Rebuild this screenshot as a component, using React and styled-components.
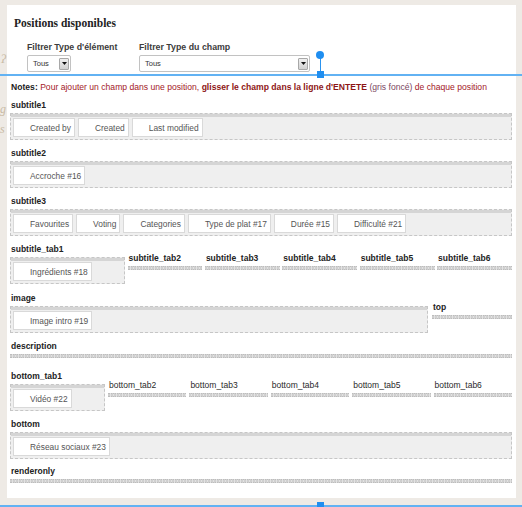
import React from 'react'
import styled, { createGlobalStyle } from 'styled-components'

const Global = createGlobalStyle`
  html, body { margin: 0; padding: 0; }
  body {
    background: #eeeae5;
    font-family: "Liberation Sans", Arial, sans-serif;
  }
  * { box-sizing: border-box; }
`

function Select({ width }) {
  return (
    <SelectBox width={width}>
      <span>Tous</span>
      <DropBtn>
        <svg width="5" height="3" viewBox="0 0 5 3"><path d="M0 0h5L2.5 3z" fill="#111" /></svg>
      </DropBtn>
    </SelectBox>
  )
}

function Position({ name, items, gap }) {
  return (
    <Section gap={gap}>
      <Label>{name}</Label>
      <Box>
        <Header />
        <Items>
          {items.map(i => <Item key={i}>{i}</Item>)}
        </Items>
      </Box>
    </Section>
  )
}

function EmptyPosition({ name }) {
  return (
    <Section gap={12}>
      <Label>{name}</Label>
      <Bar />
    </Section>
  )
}

function TabRow({ first, items, tabs, firstWidth, gap, light }) {
  return (
    <TabGrid first={firstWidth} gap={gap}>
      <div>
        <Label>{first}</Label>
        <Box>
          <Header />
          <Items>
            {items.map(i => <Item key={i}>{i}</Item>)}
          </Items>
        </Box>
      </div>
      {tabs.map(t => (
        <SideCol key={t}>
          <Label light={light}>{t}</Label>
          <Bar />
        </SideCol>
      ))}
    </TabGrid>
  )
}

export default function App() {
  return (
    <Page>
      <Global />
      <Decor top={52} left={1}>ʔ</Decor>
      <Decor top={102} left={0}>g</Decor>
      <Decor top={122} left={0}>s</Decor>
      <Panel>
        <Title>Positions disponibles</Title>
        <Filters>
          <Filter w={112}>
            <FilterLabel>Filtrer Type d'élément</FilterLabel>
            <Select width={44} />
          </Filter>
          <Filter>
            <FilterLabel>Filtrer Type du champ</FilterLabel>
            <Select width={171} />
          </Filter>
        </Filters>
        <Notes>
          <b>Notes:</b> Pour ajouter un champ dans une position,{' '}
          <strong>glisser le champ dans la ligne d'ENTETE</strong>{' '}
          <Muted>(gris foncé)</Muted> de chaque position
        </Notes>
        <Content>
          <Position name="subtitle1" items={['Created by', 'Created', 'Last modified']} />
          <Position name="subtitle2" items={['Accroche #16']} />
          <Position
            name="subtitle3"
            items={['Favourites', 'Voting', 'Categories', 'Type de plat #17', 'Durée #15', 'Difficulté #21']}
          />
          <Section gap={8}>
            <TabRow
              first="subtitle_tab1"
              items={['Ingrédients #18']}
              firstWidth={115}
              gap={2.5}
              tabs={['subtitle_tab2', 'subtitle_tab3', 'subtitle_tab4', 'subtitle_tab5', 'subtitle_tab6']}
            />
          </Section>
          <Section gap={7}>
            <ImageGrid>
              <div>
                <Label>image</Label>
                <Box>
                  <Header />
                  <Items><Item>Image intro #19</Item></Items>
                </Box>
              </div>
              <SideCol>
                <Label>top</Label>
                <Bar />
              </SideCol>
            </ImageGrid>
          </Section>
          <EmptyPosition name="description" />
          <Section gap={7}>
            <TabRow
              first="bottom_tab1"
              items={['Vidéo #22']}
              firstWidth={95}
              gap={3}
              light
              tabs={['bottom_tab2', 'bottom_tab3', 'bottom_tab4', 'bottom_tab5', 'bottom_tab6']}
            />
          </Section>
          <Position name="bottom" items={['Réseau sociaux #23']} gap={6} />
          <Section gap={0}>
            <Label>renderonly</Label>
            <Bar />
          </Section>
        </Content>
      </Panel>

      <HLine top={74} />
      <Stem />
      <Knob />
      <Grip top={71} />
      <HLine top={505} />
      <Grip top={502} />
    </Page>
  )
}

const Page = styled.div`
  position: relative;
  width: 522px;
  height: 507px;
  overflow: hidden;
  padding: 5px 6px 0 7px;
`
const Decor = styled.span`
  position: absolute;
  top: ${p => p.top}px;
  left: ${p => p.left}px;
  font-family: "Liberation Serif", serif;
  font-style: italic;
  font-size: 12px;
  color: #c9bba5;
`
const Panel = styled.div`
  background: #fff;
  height: 493px;
  padding: 11px 4px 0 3px;
`
const Title = styled.div`
  font-family: "Liberation Serif", Georgia, serif;
  font-weight: bold;
  font-size: 11.5px;
  line-height: 14px;
  color: #222;
  margin-left: 4px;
`
const Filters = styled.div`
  display: flex;
  margin: 11px 0 0 17px;
`
const Filter = styled.div`
  width: ${p => (p.w ? `${p.w}px` : 'auto')};
  display: flex;
  flex-direction: column;
  gap: 2px;
`
const FilterLabel = styled.div`
  font-size: 8.8px;
  line-height: 12px;
  font-weight: bold;
  color: #3c3c3c;
`
const SelectBox = styled.div`
  width: ${p => p.width}px;
  height: 17px;
  border: 1px solid #c2c2c2;
  border-radius: 2px;
  background: #fff;
  display: flex;
  align-items: center;
  justify-content: space-between;
  padding: 0 1px 0 5px;
  font-size: 7.5px;
  color: #333;
`
const DropBtn = styled.div`
  width: 10px;
  height: 12px;
  border: 1px solid #a8a8a8;
  border-radius: 1px;
  background: linear-gradient(#f0f0f0, #d2d2d2);
  display: flex;
  align-items: center;
  justify-content: center;
`
const Notes = styled.div`
  margin: 9px 0 6px 1px;
  font-size: 8.6px;
  line-height: 12px;
  color: #a3201f;
  white-space: nowrap;
  b { color: #222; }
  strong { color: #8e1616; }
`
const Muted = styled.span`
  color: #7a4660;
`
const Content = styled.div`
  display: flex;
  flex-direction: column;
`
const Section = styled.div`
  margin-bottom: ${p => (p.gap !== undefined ? p.gap : 7)}px;
`
const Label = styled.div`
  font-size: 8.5px;
  line-height: 12px;
  font-weight: ${p => (p.light ? 'normal' : 'bold')};
  color: ${p => (p.light ? '#2a2a2a' : '#222')};
  margin: 0 0 2px 1px;
  white-space: nowrap;
`
const Box = styled.div`
  border: 1px dashed #c6c6c6;
  background: #efefef;
`
const Header = styled.div`
  height: 3px;
  background: #d5d5d5;
`
const Items = styled.div`
  display: flex;
  gap: 3px;
  padding: 1px 2px 2px 2px;
`
const Item = styled.div`
  height: 19px;
  display: flex;
  align-items: center;
  padding: 0 3px 0 16px;
  background: #fff;
  border: 1px solid #d9d9d9;
  font-size: 8.4px;
  color: #555;
  white-space: nowrap;
`
const Bar = styled.div`
  height: 4px;
  margin-top: 2px;
  border-top: 1px dotted #bdbdbd;
  border-bottom: 1px dotted #bdbdbd;
  background: repeating-linear-gradient(90deg, #cfcfcf 0 2px, #e2e2e2 2px 3px);
`
const TabGrid = styled.div`
  display: grid;
  grid-template-columns: ${p => p.first}px repeat(5, 1fr);
  column-gap: ${p => p.gap}px;
  align-items: start;
`
const ImageGrid = styled.div`
  display: grid;
  grid-template-columns: 1fr 80px;
  column-gap: 4px;
  align-items: start;
`
const SideCol = styled.div`
  padding-top: 9px;
`
const HLine = styled.div`
  position: absolute;
  left: 0;
  right: 0;
  top: ${p => p.top}px;
  height: 2px;
  background: #62b2f3;
`
const Stem = styled.div`
  position: absolute;
  left: 319.5px;
  top: 55px;
  width: 1.5px;
  height: 20px;
  background: #2a93ef;
`
const Knob = styled.div`
  position: absolute;
  left: 316px;
  top: 51px;
  width: 8px;
  height: 8px;
  border-radius: 50%;
  background: #1f8ef0;
`
const Grip = styled.div`
  position: absolute;
  left: 317px;
  top: ${p => p.top}px;
  width: 7px;
  height: 7px;
  background: #1f8ef0;
`
